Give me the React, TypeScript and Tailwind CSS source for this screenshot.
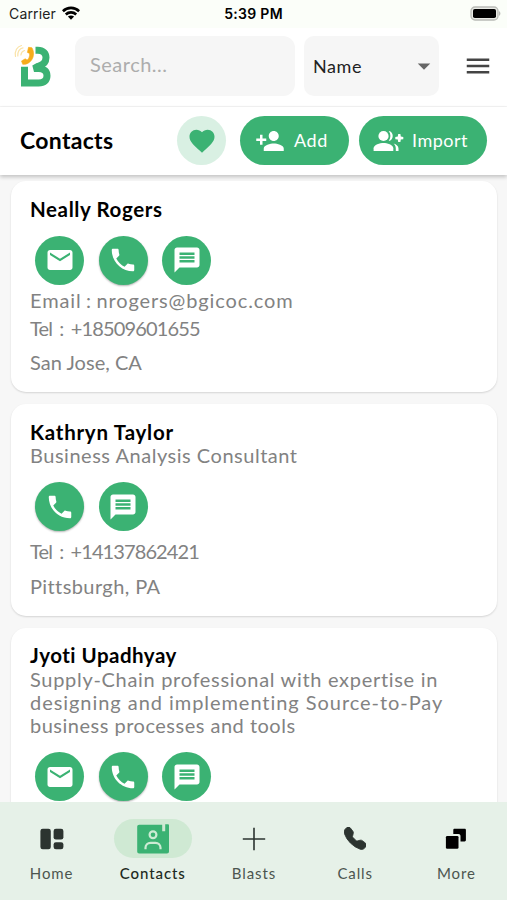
import React from 'react';
import { MdArrowDropDown, MdEmail, MdFavorite, MdMenu, MdMessage, MdPersonAdd, MdPhone } from 'react-icons/md';
import { BsTelephoneFill } from 'react-icons/bs';

type Action = 'email' | 'phone' | 'message';

interface TextLine {
    text: string;
    className: string;
}

interface Contact {
    name: TextLine;
    about?: TextLine[];
    actions: Action[];
    email?: TextLine;
    tel?: TextLine;
    location?: TextLine;
}

const contacts: Contact[] = [
    {
        name: { text: 'Neally Rogers', className: 'tracking-[0.6px]' },
        actions: ['email', 'phone', 'message'],
        email: { text: 'Email : nrogers@bgicoc.com', className: 'tracking-[0.88px] [word-spacing:-1.5px]' },
        tel: { text: 'Tel : +18509601655', className: 'tracking-[-0.85px] [word-spacing:3px]' },
        location: { text: 'San Jose, CA', className: 'tracking-[0.03px]' },
    },
    {
        name: { text: 'Kathryn Taylor', className: 'tracking-[0.75px]' },
        about: [{ text: 'Business Analysis Consultant', className: 'tracking-[0.52px]' }],
        actions: ['phone', 'message'],
        tel: { text: 'Tel : +14137862421', className: 'tracking-[-0.9px] [word-spacing:3px]' },
        location: { text: 'Pittsburgh, PA', className: 'tracking-[0.4px]' },
    },
    {
        name: { text: 'Jyoti Upadhyay', className: 'tracking-[0.5px]' },
        about: [
            { text: 'Supply-Chain professional with expertise in', className: 'tracking-[0.69px]' },
            { text: 'designing and implementing Source-to-Pay', className: 'tracking-[0.95px]' },
            { text: 'business processes and tools', className: 'tracking-[0.5px]' },
        ],
        actions: ['email', 'phone', 'message'],
    },
];

const Logo = () => (
    <svg width="40" height="46" viewBox="0 0 40 46" fill="none">
        <path
            d="M22.500 7.300h2.300c5.200 0 8.200 2.900 8.200 7.300 0 4.700-3 7.600-8 8.700l-4 2.200h4.700c5.200 0 8.300 2.600 8.300 7.200s-3.100 7.300-8.300 7.300H11.500V23.800"
            stroke="#3bb273"
            strokeWidth="7"
        />
        <path
            d="M15.500 4.300l3.400.4c2.300 3.700 2.300 9-.6 12.700-2.300 3-5.400 4.300-8.600 3.900l-1.200-3.300 3.700-2.200 1.900 1.300c1.900-1.400 2.900-4.300 2.500-6.700l-2.200-1z"
            fill="#f7ac1b"
            stroke="#f7ac1b"
            strokeWidth=".6"
            strokeLinejoin="round"
        />
        <path d="M11.500 7.500c-2 .6-3.400 2.400-3.600 4.500M10 4.800C6.500 5.400 4.300 9 4.800 13M8.500 2.500C4 3.500 1.500 8 2.500 13.500" stroke="#fae3a8" strokeWidth="1.200" strokeLinecap="round" />
    </svg>
);

const WifiIcon = () => (
    <svg width="18" height="14" viewBox="0 0 18 14" fill="none" stroke="#000" strokeWidth="2.600">
        <path d="M.9 5.200C5.400.8 12.600.8 17.100 5.200" />
        <path d="M3.800 8.500c2.900-2.800 7.500-2.800 10.400 0" />
        <path d="M9 13.700L5.900 10.600c1.800-1.600 4.400-1.600 6.200 0z" fill="#000" stroke="none" />
    </svg>
);

const BatteryIcon = () => (
    <svg width="31" height="15" viewBox="0 0 31 15">
        <rect x="1" y="1" width="27" height="13" rx="4" fill="#e9ebe6" stroke="#b9bbb6" strokeWidth="1.300" />
        <rect x="3" y="3" width="23" height="9" rx="1.800" fill="#000" />
        <path d="M29.300 5.200c1.300.5 1.300 4.100 0 4.600z" fill="#9b9d99" />
    </svg>
);

const ImportIcon = () => (
    <svg width="31" height="22" viewBox="0 0 31 22" fill="#fff">
        <circle cx="10.500" cy="6" r="5.100" />
        <path d="M.6 21v-2.700c0-3.400 6.500-5.200 9.900-5.200s9.800 1.800 9.800 5.200V21z" />
        <path d="M15.700 1.100c5.400.3 5.400 9.600 0 9.900 2.300-3 2.300-7 0-9.900z" />
        <path d="M20.600 13.500c2.800.9 4.900 2.500 4.900 4.900V21h-2.700v-2.600c0-1.900-.8-3.500-2.200-4.900z" />
        <path d="M25.200 4.100h2.200l.4 2.500 2.500.4v2.200l-2.500.4-.4 2.500h-2.200l-.4-2.500-2.500-.4V7l2.500-.4z" />
    </svg>
);

const HomeIcon = () => (
    <svg width="24" height="22" viewBox="0 0 24 22" fill="#2c3430">
        <rect x=".4" y=".8" width="10.400" height="20.400" rx="2.300" />
        <rect x="13.600" y=".8" width="9.800" height="10.800" rx="2.300" />
        <rect x="13.600" y="14.300" width="9.800" height="6.900" rx="2.300" />
    </svg>
);

const ContactsIcon = () => (
    <svg width="34" height="30" viewBox="0 0 34 30" fill="none">
        <path d="M3.200.8h23v6.400h3V.3h2.500c.9 0 1.300.5 1.300 1.300v26c0 1.200-.8 2-2 2H3.200c-1.200 0-2-.8-2-2V2.800c0-1.200.8-2 2-2z" fill="#3bb273" />
        <circle cx="17" cy="10.800" r="3.400" stroke="#cdebd4" strokeWidth="2.200" />
        <path d="M9.500 25.300v-1.500c0-3 2.200-5 5-5h5c2.800 0 5 2 5 5v1.500" stroke="#cdebd4" strokeWidth="2.200" />
    </svg>
);

const PlusIcon = () => (
    <svg width="24" height="24" viewBox="0 0 24 24" stroke="#2c3430" strokeWidth="1.600">
        <path d="M12 .8v22.400M.8 12h22.400" />
    </svg>
);

const MoreIcon = () => (
    <svg width="22" height="22" viewBox="0 0 22 22" fill="#000">
        <path d="M9.600.8h10c.8 0 1.300.5 1.300 1.300v10c0 .8-.5 1.300-1.300 1.300h-4.100V7.900c0-1.200-.8-2-2-2H8.300V2.100c0-.8.500-1.300 1.300-1.300z" />
        <rect x=".9" y="8" width="12.600" height="12.800" rx="1.300" />
    </svg>
);

const actionIcons = { email: MdEmail, phone: MdPhone, message: MdMessage };

const ActionButton: React.FC<{ type: Action }> = ({ type }) => {
    const Icon = actionIcons[type];
    return (
        <button className={`flex h-[49px] w-[49px] items-center justify-center rounded-full bg-[#3bb273] text-white ${type === 'phone' ? 'shadow-[0_1px_2px_rgba(0,0,0,0.3)]' : ''}`}>
            <Icon size={30} />
        </button>
    );
};

const ContactCard: React.FC<{ contact: Contact }> = ({ contact }) => (
    <article className="shrink-0 rounded-[15px] bg-white px-[19px] pt-[16.5px] pb-[17.5px] text-[20px] leading-[23.3px] text-[#828282] shadow-[0_1px_2px_rgba(0,0,0,0.14)]">
        <h2 className={`text-[20.5px] font-bold text-black ${contact.name.className}`}>{contact.name.text}</h2>
        {contact.about?.map((line) => (
            <p key={line.text} className={`whitespace-nowrap ${line.className}`}>{line.text}</p>
        ))}
        <div className="mt-[15px] ml-[5px] flex gap-[14.5px]">
            {contact.actions.map((a) => <ActionButton key={a} type={a} />)}
        </div>
        {contact.email && <p className={`mt-1 -mb-1 ${contact.email.className}`}>{contact.email.text}</p>}
        {contact.tel && <p className={`mt-[9px] ${contact.tel.className}`}>{contact.tel.text}</p>}
        {contact.location && <p className={`mt-[11px] ${contact.location.className}`}>{contact.location.text}</p>}
    </article>
);

const tabs = [
    { label: 'Home', icon: <HomeIcon /> },
    { label: 'Contacts', icon: <ContactsIcon />, active: true },
    { label: 'Blasts', icon: <PlusIcon /> },
    { label: 'Calls', icon: <BsTelephoneFill size={22.5} color="#2c3430" stroke="#2c3430" strokeWidth={0.6} /> },
    { label: 'More', icon: <MoreIcon /> },
];

export default function App() {
    return (
        <div className="flex h-[900px] w-[507px] flex-col overflow-hidden bg-[#f7f7f7] font-['Lato',sans-serif]">
            {/* Status bar */}
            <div className="grid h-7 shrink-0 grid-cols-3 items-center bg-[#fbfef9] pr-1.5 pl-[9px] font-['Inter',sans-serif] text-[14px] text-[#222]">
                <div className="-mt-[2px] flex items-center gap-1.5">
                    <span className="tracking-[0.15px]">Carrier</span>
                    <WifiIcon />
                </div>
                <span className="-mt-px -ml-[3px] text-center font-semibold tracking-[0.3px] text-black">5:39 PM</span>
                <div className="-mt-[2px] flex justify-end"><BatteryIcon /></div>
            </div>

            {/* Search header */}
            <header className="flex h-[79px] shrink-0 items-center border-b border-[#f5f5f5] bg-white pt-px pr-[14px] pl-[13px] pb-[4px]">
                <Logo />
                <div className="ml-[22px] flex h-[60px] w-[220px] items-center rounded-[12px] bg-[#f6f6f6] px-[15px] pb-[3px] text-[20px] tracking-[0.5px] text-[#adadad]">
                    Search...
                </div>
                <div className="ml-[9px] flex h-[60px] w-[135px] items-center justify-between rounded-[10px] bg-[#f6f6f6] pr-0 pl-[9px] text-[18px] text-[#222]">
                    <span className="pt-0.5 tracking-[0.6px]">Name</span>
                    <MdArrowDropDown size={30} color="#666" />
                </div>
                <MdMenu size={30} color="#444" className="ml-auto" />
            </header>

            {/* Page toolbar */}
            <div className="z-10 flex h-[68px] shrink-0 items-center bg-white pr-5 pb-px pl-5 shadow-[0_2px_4px_rgba(0,0,0,0.22)]">
                <h1 className="text-[23px] font-bold tracking-[0.3px] text-black">Contacts</h1>
                <button className="ml-auto flex h-[49px] w-[49px] items-center justify-center rounded-full bg-[#d9f0e3] text-[#3bb273]">
                    <MdFavorite size={30} />
                </button>
                <button className="ml-[14px] flex h-[49px] w-[109px] items-center rounded-full bg-[#3bb273] pl-[15px] text-[18px] text-white">
                    <MdPersonAdd size={30} />
                    <span className="ml-[9px] pb-px tracking-[0.6px]">Add</span>
                </button>
                <button className="ml-[10px] flex h-[49px] w-[128px] items-center rounded-full bg-[#3bb273] pl-[14px] text-[18px] text-white">
                    <ImportIcon />
                    <span className="ml-[8px] pb-px tracking-[0.5px]">Import</span>
                </button>
            </div>

            <main className="flex min-h-0 flex-1 flex-col gap-[12.2px] overflow-hidden pt-[6px] pr-[10px] pl-[11px]">
                {contacts.map((c) => <ContactCard key={c.name.text} contact={c} />)}
            </main>

            {/* Bottom tabs */}
            <nav className="z-10 grid h-[98px] shrink-0 grid-cols-5 bg-[#e6f1e8] pt-[17px] pl-px">
                {tabs.map((tab) => (
                    <button key={tab.label} className="flex flex-col items-center justify-start">
                        <span className={`flex h-[39px] w-[78px] items-center justify-center rounded-full ${tab.active ? 'bg-[#cfe9d3]' : ''}`}>
                            {tab.icon}
                        </span>
                        <span className={`mt-[5px] text-[15px] leading-5 tracking-[0.9px] ${tab.active ? 'font-medium text-[#1d2a22]' : 'text-[#4c554f]'}`}>
                            {tab.label}
                        </span>
                    </button>
                ))}
            </nav>
        </div>
    );
}
